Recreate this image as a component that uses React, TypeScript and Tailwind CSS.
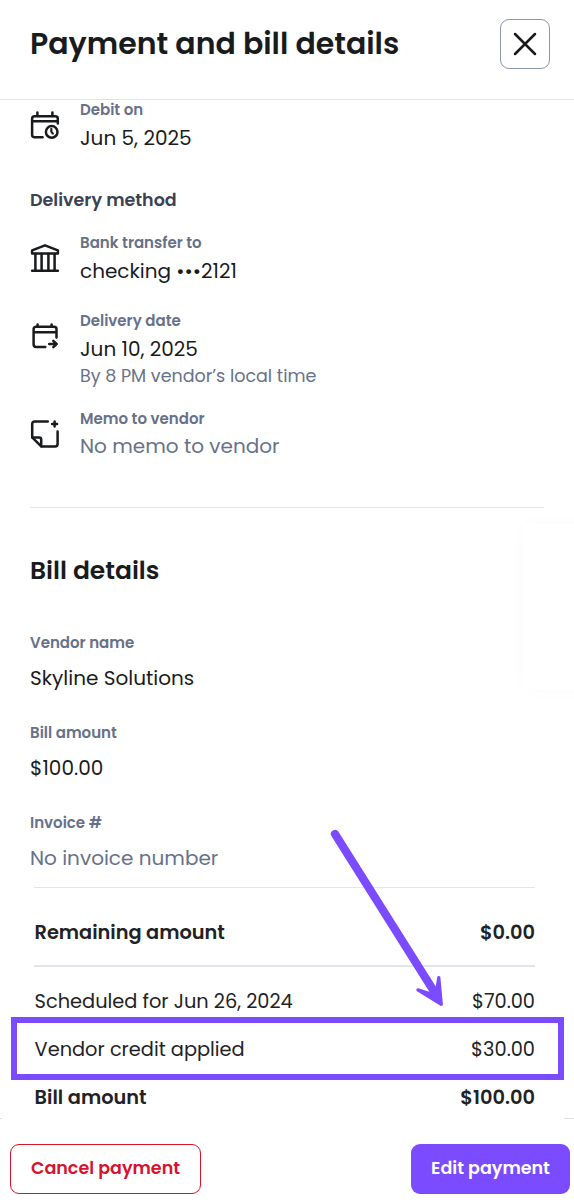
import type { ReactNode } from "react";

const iconProps = {
  width: 30,
  height: 30,
  viewBox: "0 0 30 30",
  fill: "none",
  stroke: "currentColor",
  strokeWidth: 2.5,
  strokeLinecap: "round",
  strokeLinejoin: "round",
} as const;

function CalendarClockIcon() {
  return (
    <svg {...iconProps}>
      <path d="M7.4 2.4V6M22.4 2.4V6" />
      <path d="M12.6 27.3H4.6A2.5 2.5 0 0 1 2.1 24.8V8.7A2.5 2.5 0 0 1 4.6 6.2H25.3A2.5 2.5 0 0 1 27.8 8.7V13.6M2.1 11.3H27.8" />
      <circle cx="21.7" cy="21.9" r="5.8" />
      <path d="M21.3 18.9V21.7L22.9 23.7" strokeWidth="2.1" />
    </svg>
  );
}

function BankIcon() {
  return (
    <svg {...iconProps}>
      <path d="M2.1 10.6V7.4L15 2.3L27.9 7.4V10.6H2.1Z" />
      <path d="M5.4 11V27.6M11.6 11V27.6M18.4 11V27.6M24.6 11V27.6M2.1 27.8H27.9" />
    </svg>
  );
}

function CalendarArrowIcon() {
  return (
    <svg {...iconProps}>
      <path d="M7.6 3.6V5.4M21.6 3.6V5.4" />
      <path d="M15.3 26H6A2.4 2.4 0 0 1 3.6 23.6V8.2A2.4 2.4 0 0 1 6 5.8H24.1A2.4 2.4 0 0 1 26.5 8.2V16.6M3.6 11.3H26.5" />
      <path d="M19.2 23H26.7M23.3 19.8L26.7 23L23.3 26.2" />
    </svg>
  );
}

function MemoIcon() {
  return (
    <svg {...iconProps}>
      <path d="M17.8 2.4H4.6A2.4 2.4 0 0 0 2.2 4.8V18.4L11.2 27.4H25.2A2.4 2.4 0 0 0 27.6 25V12.4" />
      <path d="M2.4 18.5H9.2A2 2 0 0 1 11.2 20.5V27.2" />
      <path d="M24.6 2.6V7.6M22.1 5.1H27.1" />
    </svg>
  );
}

function DetailRow({ icon, label, children }: { icon: ReactNode; label: string; children: ReactNode }) {
  return (
    <div className="flex gap-5">
      <div className="shrink-0 pt-2.5 text-[#191b1d]">{icon}</div>
      <div className="flex flex-col">
        <div className="h-5 text-[15px]/5 font-semibold text-[#67718a]">{label}</div>
        {children}
      </div>
    </div>
  );
}

function Field({ label, children }: { label: string; children: ReactNode }) {
  return (
    <div className="flex h-[90px] shrink-0 flex-col gap-2.5">
      <div className="h-5 text-[15px]/5 font-semibold text-[#67718a]">{label}</div>
      <div className="h-[30px] text-xl/[30px]">{children}</div>
    </div>
  );
}

function HighlightArrow() {
  return (
    <svg
      className="pointer-events-none absolute left-[325px] top-[825px] text-[#7a4bff]"
      width="125"
      height="190"
      viewBox="325 825 125 190"
      fill="currentColor"
      stroke="currentColor"
      strokeLinecap="round"
      strokeLinejoin="round"
    >
      <path d="M335 834L435 993" strokeWidth="8.2" />
      <path d="M417.9 989.8L431 994L437 988.5L438.8 977.5L441.3 1004.4Z" strokeWidth="3.2" />
    </svg>
  );
}

export default function App() {
  return (
    <main className="relative flex h-[1202px] w-[574px] flex-col overflow-hidden whitespace-nowrap bg-white font-['Poppins','Inter',sans-serif] text-[#191b1d]">
      <header className="flex h-[100px] shrink-0 items-start justify-between border-b border-[#e2e3e5] pl-[30px] pr-6 pt-[19px]">
        <h1 className="h-[50px] text-[30px]/[50px] font-semibold">Payment and bill details</h1>
        <button
          aria-label="Close"
          className="flex size-[50px] items-center justify-center rounded-[9px] border border-[#8b95ad]"
        >
          <svg width="26" height="26" viewBox="0 0 26 26" fill="none" stroke="currentColor" strokeWidth="2.5" strokeLinecap="round">
            <path d="M3 3L23 23M23 3L3 23" />
          </svg>
        </button>
      </header>

      <section className="flex h-[407px] shrink-0 flex-col px-[30px]">
        <div className="h-[90px]">
          <DetailRow icon={<CalendarClockIcon />} label="Debit on">
            <div className="mt-[3px] h-[30px] text-xl/[30px]">Jun 5, 2025</div>
          </DetailRow>
        </div>
        <h2 className="h-[43px] text-[17.5px]/5 font-semibold text-[#3a4254]">Delivery method</h2>
        <div className="h-[78px]">
          <DetailRow icon={<BankIcon />} label="Bank transfer to">
            <div className="mt-[3px] h-[30px] text-xl/[30px]">checking •••2121</div>
          </DetailRow>
        </div>
        <div className="h-[98px]">
          <DetailRow icon={<CalendarArrowIcon />} label="Delivery date">
            <div className="mt-[3px] h-[30px] text-xl/[30px]">Jun 10, 2025</div>
            <div className="mt-0.5 h-5 text-[17.5px]/5 text-[#67718a]">By 8 PM vendor’s local time</div>
          </DetailRow>
        </div>
        <DetailRow icon={<MemoIcon />} label="Memo to vendor">
          <div className="mt-0.5 h-[30px] text-xl/[30px] text-[#67718a]">No memo to vendor</div>
        </DetailRow>
      </section>

      <section className="mx-[30px] flex h-[380px] shrink-0 flex-col border-t border-[#e2e3e5] pt-12">
        <h2 className="h-[77px] shrink-0 text-[25px]/[30px] font-semibold">Bill details</h2>
        <Field label="Vendor name">Skyline Solutions</Field>
        <Field label="Bill amount">$100.00</Field>
        <Field label="Invoice #">
          <span className="text-[#67718a]">No invoice number</span>
        </Field>
      </section>

      <section className="flex shrink-0 flex-col text-[19.35px]/[30px] text-[#222225]">
        <div className="ml-[34px] mr-[39px] flex h-20 justify-between border-b-2 border-t border-b-[#e1e4e9] border-t-[#e3e5e8] pl-[0.6px] pt-[30px] font-semibold tracking-[-0.03px]">
          <span>Remaining amount</span>
          <span>$0.00</span>
        </div>
        <div className="ml-[34.6px] mr-[39px] mt-5 flex justify-between">
          <span>Scheduled for Jun 26, 2024</span>
          <span>$70.00</span>
        </div>
        <div className="ml-[11px] mr-2.5 flex h-[63px] items-center justify-between border-[6px] border-[#7a4bff] pl-[17.6px] pr-[23px] pt-0.5">
          <span>Vendor credit applied</span>
          <span>$30.00</span>
        </div>
        <div className="ml-[34.6px] mr-[39px] mt-[3px] flex justify-between font-semibold">
          <span>Bill amount</span>
          <span>$100.00</span>
        </div>
      </section>

      <footer className="mt-[5px] flex flex-col">
        <div className="flex h-px justify-between">
          <div className="w-0.5 bg-[#dddfe3]" />
          <div className="w-2.5 bg-[#dddfe3]" />
        </div>
        <div className="flex justify-between pl-2.5 pr-1 pt-[25px] text-[17.5px]/[46px] font-semibold">
          <button className="h-[50px] w-[191px] rounded-[9px] border border-[#d8122f] pb-0.5 text-[#d8122f]">
            Cancel payment
          </button>
          <button className="h-[50px] w-[159px] rounded-[9px] bg-[#7a4bff] pb-0.5 text-white">Edit payment</button>
        </div>
      </footer>

      <div className="pointer-events-none absolute left-[523px] top-[524px] h-[166px] w-20 bg-white shadow-[0_0_20px_rgba(0,0,0,0.02)]" />
      <HighlightArrow />
    </main>
  );
}
